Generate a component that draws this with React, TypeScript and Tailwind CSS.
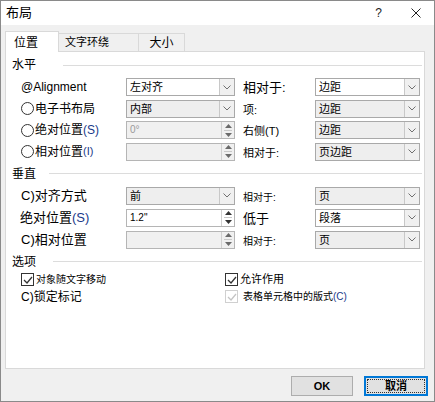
import type { ReactNode } from 'react';

const FONT = "font-['Liberation_Sans','Noto_Sans_CJK_SC',sans-serif]";

function Chevron() {
  return (
    <svg width="8" height="5" viewBox="0 0 8 5">
      <path d="M0.5 0.5 L4 4 L7.5 0.5" fill="none" stroke="#707070" strokeWidth="1" />
    </svg>
  );
}

function Select({ value, white, className = '' }: { value: string; white?: boolean; className?: string }) {
  return (
    <div
      className={`flex h-[18px] border border-[#a9a9a9] ${white ? 'bg-white' : 'bg-[#eeeeee]'} ${className}`}
    >
      <div className="flex-1 pl-[3px] text-[11px] leading-[16px] text-black">{value}</div>
      <div className="flex w-[15px] items-center justify-center border-l border-[#c8c8c8] bg-[#f0f0f0]">
        <Chevron />
      </div>
    </div>
  );
}

function Spin({ value, white, disabled }: { value?: string; white?: boolean; disabled?: boolean }) {
  return (
    <div
      className={`flex h-[18px] w-[109px] border border-[#b5b5b5] ${white ? 'bg-white' : 'bg-[#f0f0f0]'}`}
    >
      <div
        className={`flex-1 pl-[3px] text-[10px] leading-[16px] ${disabled ? 'text-[#9a9a9a]' : 'text-black'}`}
      >
        {value}
      </div>
      <div className="flex w-[13px] flex-col items-center justify-center gap-[2px] border-l border-[#d0d0d0]">
        <svg width="7" height="4" viewBox="0 0 7 4">
          <path d="M0 4 L3.5 0 L7 4 Z" fill={disabled ? '#6a6a6a' : '#333'} />
        </svg>
        <div className="h-px w-[8px] bg-[#c8c8c8]" />
        <svg width="7" height="4" viewBox="0 0 7 4">
          <path d="M0 0 L3.5 4 L7 0 Z" fill={disabled ? '#6a6a6a' : '#333'} />
        </svg>
      </div>
    </div>
  );
}

function Radio() {
  return <span className="mr-[1px] inline-block h-[13px] w-[13px] shrink-0 rounded-full border border-[#333] bg-white" />;
}

function Check({ disabled }: { disabled?: boolean }) {
  const c = disabled ? '#c4c4c4' : '#333';
  return (
    <span
      className={`mr-[2px] inline-flex h-[13px] w-[13px] shrink-0 items-center justify-center border ${disabled ? 'border-[#d0d0d0]' : 'border-[#333]'} bg-white`}
    >
      <svg width="10" height="8" viewBox="0 0 10 8">
        <path d="M1 4 L4 7 L9 1" fill="none" stroke={c} strokeWidth="1.3" />
      </svg>
    </span>
  );
}

function Heading({ label, lineStart }: { label: string; lineStart: string }) {
  return (
    <div className="flex h-[14px] items-center pl-[6px]">
      <span className={`text-[12px] leading-[14px] text-black ${lineStart}`}>{label}</span>
      <div className="mr-[2px] h-px flex-1 bg-[#dcdcdc]" />
    </div>
  );
}

function Row({ left, mid, label, right }: { left: ReactNode; mid: ReactNode; label: ReactNode; right: ReactNode }) {
  return (
    <div className="flex h-[18px] items-center">
      <div className="flex w-[120px] items-center pl-[15px] text-[12px] text-black">{left}</div>
      <div className="w-[109px]">{mid}</div>
      <div className="ml-[8px] w-[72px] text-black">{label}</div>
      <div className="w-[105px]">{right}</div>
    </div>
  );
}

export default function App() {
  return (
    <div className={`flex h-[402px] w-[435px] flex-col border border-[#8a8a8a] bg-[#f0f0f0] ${FONT}`}>
      {/* title bar */}
      <div className="flex h-[24px] shrink-0 items-center bg-white pl-[5px]">
        <span className="text-[13px] text-black">布局</span>
        <span className="ml-auto text-[12px] text-[#222]">?</span>
        <svg className="ml-[29px] mr-[13px]" width="10" height="10" viewBox="0 0 10 10">
          <path d="M0.5 0.5 L9.5 9.5 M9.5 0.5 L0.5 9.5" stroke="#222" strokeWidth="1" />
        </svg>
      </div>

      {/* tabs */}
      <div className="mt-[6px] flex h-[20px] items-end pl-[4px]">
        <div className="relative z-10 -mb-px flex h-[21px] w-[54px] items-start border border-b-0 border-[#d9d9d9] bg-white pl-[8px] pt-[2px] text-[12px] text-black">
          位置
        </div>
        <div className="flex h-[18px] w-[80px] items-center border border-b-0 border-l-0 border-[#d9d9d9] bg-[#f0f0f0] pl-[6px] text-[11px] text-black">
          文字环绕
        </div>
        <div className="flex h-[18px] w-[46px] items-center justify-center border border-b-0 border-l-0 border-[#d9d9d9] bg-[#f0f0f0] text-[12px] text-black">
          大小
        </div>
      </div>

      {/* panel */}
      <div className="ml-[4px] h-[318px] w-[420px] border border-[#d9d9d9] bg-white">
        <div className="mt-[6px]">
          <Heading label="水平" lineStart="mr-[27px]" />
        </div>
        <div className="mt-[6px] flex flex-col gap-[3.5px]">
          <Row
            left={<span className="text-[12px]">@Alignment</span>}
            mid={<Select value="左对齐" white />}
            label={<span className="text-[13px]">相对于:</span>}
            right={<Select value="边距" white />}
          />
          <Row
            left={<><Radio />电子书布局</>}
            mid={<Select value="内部" />}
            label={<span className="text-[11px]">项:</span>}
            right={<Select value="边距" />}
          />
          <Row
            left={<><Radio />绝对位置<span className="text-[#1a3a8a]">(S)</span></>}
            mid={<Spin value="0°" disabled />}
            label={<span className="text-[11px]">右侧(T)</span>}
            right={<Select value="边距" />}
          />
          <Row
            left={<><Radio />相对位置<span className="text-[11px] text-[#1a3a8a]">(I)</span></>}
            mid={<Spin disabled />}
            label={<span className="text-[11px]">相对于:</span>}
            right={<Select value="页边距" />}
          />
        </div>

        <div className="mt-[6px]">
          <Heading label="垂直" lineStart="mr-[13px]" />
        </div>
        <div className="mt-[6px] flex flex-col gap-[4px]">
          <Row
            left={<span className="text-[13px]">C)对齐方式</span>}
            mid={<Select value="前" />}
            label={<span className="text-[10px]">相对于:</span>}
            right={<Select value="页" />}
          />
          <Row
            left={<span className="-ml-px text-[13px]">绝对位置<span className="text-[#1a3a8a]">(S)</span></span>}
            mid={<Spin value={'1.2"'} white />}
            label={<span className="text-[13px]">低于</span>}
            right={<Select value="段落" white />}
          />
          <Row
            left={<span className="text-[13px]">C)相对位置</span>}
            mid={<Spin disabled />}
            label={<span className="text-[10px]">相对于:</span>}
            right={<Select value="页" />}
          />
        </div>

        <div className="mt-[6px]">
          <Heading label="选项" lineStart="mr-[17px] text-[10px]" />
        </div>
        <div className="mt-[3px] flex">
          <div className="flex w-[219px] flex-col gap-[1px] pl-[15px]">
            <div className="flex h-[16px] items-center text-[10px] text-black">
              <Check />
              对象随文字移动
            </div>
            <div className="flex h-[16px] items-center text-[12px] text-black">C)锁定标记</div>
          </div>
          <div className="flex flex-col gap-[1px]">
            <div className="flex h-[16px] items-center text-[11px] text-black">
              <Check />
              允许作用
            </div>
            <div className="flex h-[16px] items-center text-[10px] text-black">
              <Check disabled />
              <span className="ml-[3px]">表格单元格中的版式</span>
              <span className="text-[#1a3a8a]">(C)</span>
            </div>
          </div>
        </div>
      </div>

      {/* buttons */}
      <div className="mt-[7px] flex justify-end gap-[11px] pr-[6px]">
        <button className="h-[20px] w-[62px] border border-[#adadad] bg-[#e1e1e1] text-[11px] font-bold text-black">
          OK
        </button>
        <button className="flex h-[20px] w-[64px] items-center justify-center border-2 border-[#0078d7] bg-[#e1e1e1] p-[1px]">
          <span className="flex h-full w-full items-center justify-center border border-dotted border-[#333] text-[11px] font-bold text-black">
            取消
          </span>
        </button>
      </div>
    </div>
  );
}
